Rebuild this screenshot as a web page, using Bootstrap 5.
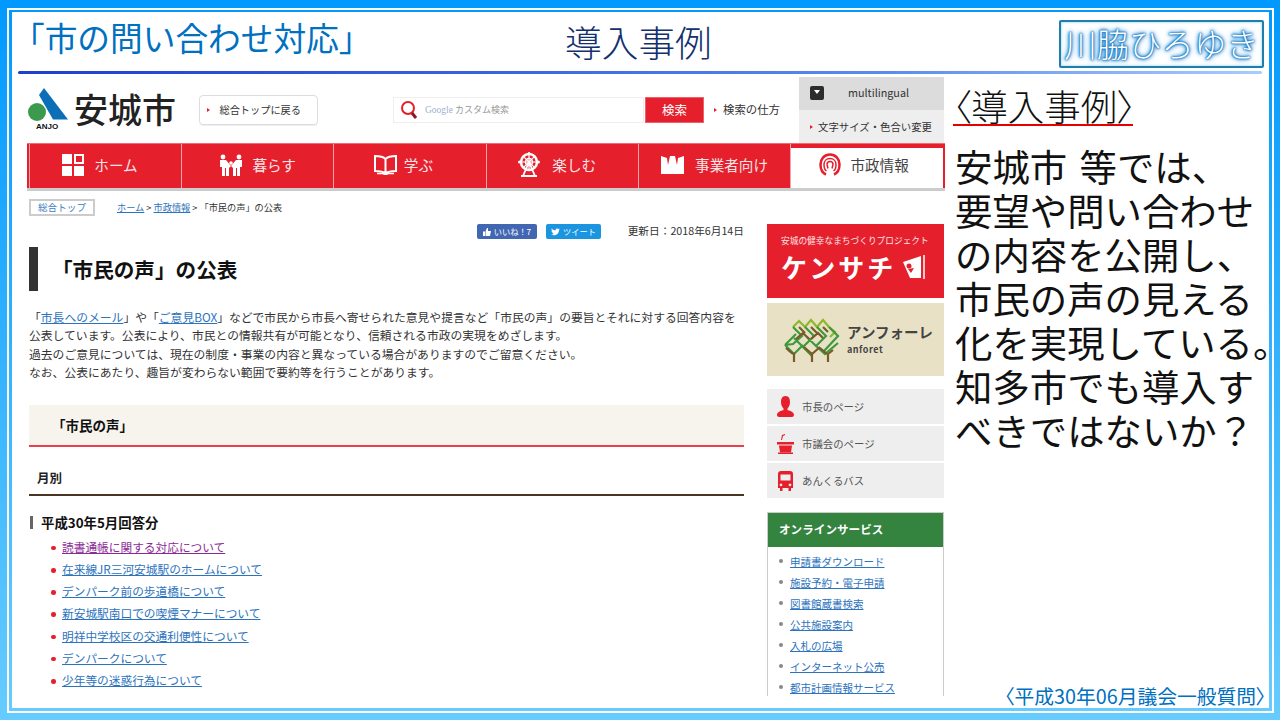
<!DOCTYPE html>
<html lang="ja">
<head>
<meta charset="utf-8">
<title>市の問い合わせ対応 導入事例</title>
<link href="https://cdn.jsdelivr.net/npm/bootstrap@5.3.0/dist/css/bootstrap.min.css" rel="stylesheet">
<style>
html,body{margin:0;height:100%;overflow:hidden;background:#fff}
body{font-family:"Noto Sans CJK JP","Noto Sans",sans-serif;color:#222}
.frame-a{width:1280px;height:720px;padding:8px 6px 7px 7px;background:linear-gradient(#0099ff,#66ccff)}
.frame-b{height:100%;padding:1.5px 2px 2px 2px;background:#fff}
.frame-c{height:100%;padding:2.5px 3px 3px 3px;background:linear-gradient(#0099ff,#66ccff)}
.frame-d{height:100%;background:#fff}
.head-row{height:59px;flex:none}
.ttl-l{width:553px;padding-left:0;font-size:32.7px;line-height:1;color:#0070c0;padding-bottom:8px;white-space:nowrap}
.ttl-c{width:494px;font-size:36.7px;line-height:1;color:#12306e;font-weight:300;white-space:nowrap}
.name-box{width:205px;height:48px;margin-top:4px;border:2px solid #1e7fae;border-radius:2px;font-size:32.4px;line-height:1;color:#fff;font-weight:300;text-shadow:0 0 1px #0a6fc0,0 0 2px #0a6fc0,0 0 3px #0a6fc0,0 0 4px #0d7ccc,0 0 6px #3aa0e0;white-space:nowrap;box-shadow:inset 0 0 3px #8cc8e8}
.rule{height:3px;margin:0 7px 2px 6px;flex:none;border-radius:2px;background:linear-gradient(90deg,#1d3fd0 0,#3a63e0 38%,#5c8cf0 70%,#a8ccff 100%)}
.body-row{height:632px;flex:none}
.site{width:932px;height:620px;flex:none;overflow:hidden;margin-left:6px;padding:1px 5px 0 9px;color:#333}
.site-top{height:66px;flex:none}
.logo-svg{flex:none}
.logo-txt{font-size:34px;line-height:1;color:#222;margin-left:6px;font-weight:500;white-space:nowrap;flex:none;padding-bottom:3px}
.back-btn{width:119px;height:30px;margin-left:23px;border:1px solid #ddd;border-radius:4px;font-size:10.2px;color:#333;padding-left:7px;box-shadow:0 1px 0 #eee;white-space:nowrap;flex:none}
.tri{display:inline-block;width:0;height:0;border-left:3.5px solid #e61f2d;border-top:2.5px solid transparent;border-bottom:2.5px solid transparent;margin-right:9.5px;flex:none}
.search-box{width:251px;height:26px;margin-left:75px;border:1px solid #eee;padding-left:6px;font-size:9px;color:#999;white-space:nowrap;flex:none}
.g-word{font-size:9.5px;color:#9fb0d0;margin-left:6px;margin-right:2px;font-family:"Liberation Serif",serif}
.search-go{width:59px;height:26px;margin-left:1px;background:#e61f2d;color:#fff;font-size:12.5px;border:1px solid #f0606a;flex:none}
.how-to{margin-left:10px;width:85px;font-size:11.4px;color:#333;white-space:nowrap;flex:none}
.how-to .tri{margin-right:6px}
.lang-box{width:145px;flex:none}
.lang-a{height:33px;background:#dcdcdc;font-size:10.8px;color:#333;padding-left:11px;padding-bottom:2px}
.lang-sq{width:14px;height:14px;background:#2d2d2d;border-radius:2px;margin-right:24px}
.lang-b{height:33px;background:#eeeeee;font-size:10.4px;color:#333;padding-left:11px;white-space:nowrap}
.lang-b .tri{margin-right:5px}
.main-nav{height:45px;background:#e61f2d;border-top:1px solid #f26a73;box-shadow:0 3px 0 #ccc;flex:none;padding-left:2px;color:#fff;font-size:14.6px}
.nav-cell{flex:0 0 152.3px;height:100%;border-right:1px solid #f4a3a8;gap:9px;white-space:nowrap;color:#f8e4e4;padding-bottom:3px}
.nav-first{border-left:1px solid #f4a3a8;flex-basis:153px;padding-right:11px;gap:10px}
.nudge-b{padding-right:13px;gap:7px}
.nudge-c{padding-right:10px;gap:12px}
.nudge-e{gap:11px}
.nav-now{flex:1 1 auto;background:#fff;color:#444;border-top:4px solid #e61f2d;border-right:2px solid #e61f2d;gap:9px;padding-bottom:7px;padding-right:6px}
.crumb-row{margin-top:11px;margin-left:2px;height:17px;font-size:9.2px;color:#333;white-space:nowrap}
.home-tag{width:66px;height:17px;border:2px solid #ccc;color:#3f82c4;font-size:9.6px;margin-right:22px}
.site a{color:#2c73bd;text-decoration:underline}
.site a.seen{color:#8b2a96}
.split{margin-top:8px;margin-left:2px}
.col-main{width:715px;flex:none}
.col-side{width:177px;margin-left:23px;flex:none}
.meta-row{height:15px}
.soc-a,.soc-b{height:15px;border-radius:2px;color:#fff;font-size:8.2px;white-space:nowrap;gap:3px}
.soc-a{width:60px;background:#4267b2}
.soc-b{width:55px;background:#1b95e0;margin-left:9px;margin-right:26px}
.upd{width:117px;font-size:10.7px;white-space:nowrap;text-align:right;color:#333}
.h-block{height:44px;margin-top:8px;border-left:9px solid #333;padding-left:14px;font-size:20.6px;font-weight:700;color:#111;white-space:nowrap}
.para{margin:16.5px 0 0;font-size:11.8px;line-height:18.6px;white-space:nowrap;color:#333}
.sec-a{height:42px;margin-top:23px;background:#f7f4ed;border-bottom:2px solid #e8404f;padding-left:23px;font-size:13.5px;font-weight:700;color:#111}
.sec-b{height:29px;margin-top:20px;border-bottom:2px solid #4a3520;padding-left:8px;padding-bottom:4px;font-size:12.5px;font-weight:700;color:#222}
.sec-c{height:13px;margin-top:20px;border-left:3.5px solid #666;margin-left:1px;padding-left:8px;font-size:13.4px;font-weight:700;color:#111;line-height:13px;white-space:nowrap}
.link-list{margin:7px 0 0;padding:0;list-style:none;font-size:11.7px;line-height:22.2px}
.link-list li{padding-left:33px;position:relative}
.link-list li::before{content:"";position:absolute;left:22px;top:10px;width:4.5px;height:4.5px;border-radius:50%;background:#e61f2d}
.ban-red{height:74px;background:#e61f2d;color:#fff;padding:12px 0 0 14px}
.ban-sub{font-size:8.7px;line-height:1.2;white-space:nowrap;color:#fbe6e6}
.ban-big{font-size:26px;line-height:1;font-weight:700;letter-spacing:3px;margin-top:8px;white-space:nowrap}
.ban-tan{height:73px;margin-top:5px;background:#e8e1c6;padding-left:17px;gap:7px;color:#444}
.anf-a{font-size:14.5px;font-weight:700;line-height:1;white-space:nowrap}
.anf-b{font-size:9px;font-weight:700;line-height:1;margin-top:5px;letter-spacing:.5px}
.grey-btns{margin-top:13px;gap:2px}
.grey-btn{height:35px;background:#eeeeee;font-size:10.4px;color:#555;padding-left:10px;white-space:nowrap}
.grey-btn svg{width:17px;margin-right:8px;flex:none}
.svc-box{margin-top:14px;border:1px solid #ccc;border-bottom:0;height:200px}
.svc-head{height:34px;background:#34833f;color:#fff;font-size:11.6px;font-weight:700;padding-left:11px;white-space:nowrap}
.svc-list{margin:4px 0 0;padding:0;list-style:none;font-size:10.5px;line-height:21px}
.svc-list li{padding-left:22px;position:relative;white-space:nowrap}
.svc-list li::before{content:"";position:absolute;left:11px;top:8px;width:4px;height:4px;border-radius:50%;background:#888}
.side-txt{padding-left:5px;min-width:0;flex:1 1 0}
.case-head{align-self:flex-start;margin-top:12px;margin-left:-2px;font-size:36.5px;line-height:36px;color:#111;border-bottom:2.5px solid #e60000;white-space:nowrap;font-weight:300;height:38px}
.narrow{font-feature-settings:"palt" 1}
.narrow-end{margin-right:-3px}
.big-txt{margin:18px 0 0;font-size:37.4px;line-height:44px;color:#111;white-space:nowrap;word-spacing:4px}
.foot-note{margin-top:auto;align-self:flex-end;font-size:19.8px;line-height:24px;color:#0070c0;white-space:nowrap;margin-right:3px}
</style>
</head>
<body>
<div class="frame-a"><div class="frame-b"><div class="frame-c"><div class="frame-d d-flex flex-column">

  <div class="head-row d-flex align-items-center">
    <div class="ttl-l">「市の問い合わせ対応」</div>
    <div class="ttl-c">導入事例</div>
    <div class="name-box d-flex align-items-center justify-content-center">川脇ひろゆき</div>
  </div>
  <div class="rule"></div>

  <div class="body-row d-flex">
    <div class="site d-flex flex-column">
      <div class="site-top d-flex align-items-center">
        <svg width="41" height="44" viewBox="0 0 41 44" class="logo-svg" aria-hidden="true">
          <path d="M17 0L41 31.500H26L12 7Z" fill="#0b6fb8"/>
          <circle cx="10" cy="24" r="9" fill="#3b9a4e"/>
          <text x="9" y="41" font-family="Liberation Sans,sans-serif" font-size="8" font-weight="700" fill="#111">ANJO</text>
        </svg>
        <div class="logo-txt">安城市</div>
        <div class="back-btn d-flex align-items-center"><span class="tri"></span>総合トップに戻る</div>
        <div class="search-box d-flex align-items-center">
          <svg width="19" height="20" viewBox="0 0 19 20" aria-hidden="true"><circle cx="8" cy="8" r="6" fill="none" stroke="#e61f2d" stroke-width="2"/><path d="M12 13l4 5" stroke="#8a1a22" stroke-width="3"/></svg>
          <span class="g-word">Google</span>カスタム検索
        </div>
        <div class="search-go d-flex align-items-center justify-content-center">検索</div>
        <div class="how-to d-flex align-items-center"><span class="tri"></span>検索の仕方</div>
        <div class="lang-box">
          <div class="lang-a d-flex align-items-center"><span class="lang-sq d-flex align-items-center justify-content-center"><svg width="6" height="5" viewBox="0 0 6 5" aria-hidden="true"><path d="M0 0h6L3 4z" fill="#fff"/></svg></span>multilingual</div>
          <div class="lang-b d-flex align-items-center"><span class="tri"></span>文字サイズ・色合い変更</div>
        </div>
      </div>

      <div class="main-nav d-flex">
        <div class="nav-cell nav-first d-flex align-items-center justify-content-center">
          <svg width="22" height="22" viewBox="0 0 22 22" aria-hidden="true"><path d="M0 0h10v10H0zM0 12h10v10H0zM12 12h10v10H12z" fill="#fff"/><path d="M13 1h8v8h-8z" fill="none" stroke="#fff" stroke-width="2"/></svg>ホーム
        </div>
        <div class="nav-cell d-flex align-items-center justify-content-center" >
          <svg width="24" height="22" viewBox="0 0 24 22" aria-hidden="true" fill="#fff"><circle cx="4" cy="3" r="2.400"/><circle cx="20" cy="3" r="2.400"/><circle cx="12" cy="9" r="1.800"/><path d="M1 6h6l5 6 5-6h6v7h-2v9h-3v-8h-1v8h-3v-8l-2-2-2 2v8H7v-8H6v8H3v-9H1z"/></svg>暮らす
        </div>
        <div class="nav-cell nudge-b d-flex align-items-center justify-content-center">
          <svg width="23" height="20" viewBox="0 0 23 20" aria-hidden="true"><path d="M11.500 4C9 1.500 5 1 1 1v15c4 0 8 .3 10.500 2.500C14 16.300 18 16 22 16V1c-4 0-8 .5-10.500 3zM11.500 4v14" fill="none" stroke="#fff" stroke-width="2"/><path d="M3 18.500h6l2.500 1.500 2.500-1.500h6" fill="none" stroke="#fff" stroke-width="1.500"/></svg>学ぶ
        </div>
        <div class="nav-cell nudge-c d-flex align-items-center justify-content-center" >
          <svg width="22" height="25" viewBox="0 0 22 25" aria-hidden="true" fill="none" stroke="#fff"><circle cx="11" cy="10" r="8" stroke-width="2.500"/><circle cx="11" cy="10" r="3.500" stroke-width="1.500"/><path d="M11 2v16M3 10h16M5.300 4.300l11.400 11.400M16.700 4.300L5.300 15.700" stroke-width="1.200"/><path d="M11 10L5 24M11 10l6 14M3 24h16" stroke-width="1.800"/><circle cx="11" cy="1.500" r="1.500" fill="#fff" stroke="none"/><circle cx="1.500" cy="10" r="1.500" fill="#fff" stroke="none"/><circle cx="20.500" cy="10" r="1.500" fill="#fff" stroke="none"/></svg>楽しむ
        </div>
        <div class="nav-cell nudge-e d-flex align-items-center justify-content-center" >
          <svg width="23" height="18" viewBox="0 0 23 18" aria-hidden="true"><path d="M0 0l6 2 1 7 2-9h5l2 9 1-7 6-2v18H0z" fill="#fff"/></svg>事業者向け
        </div>
        <div class="nav-cell nav-now d-flex align-items-center justify-content-center">
          <svg width="22" height="23" viewBox="0 0 22 23" aria-hidden="true" fill="none" stroke="#e61f2d"><path d="M7 21.500C3.500 20 1.500 16 1.500 11.500 1.500 6 5.500 1.500 11 1.500s9.500 4.500 9.500 10c0 4.500-2 8.500-5.500 10" stroke-width="2.500"/><path d="M7.500 18c-1.500-1-2.500-3.500-2.500-6.500C5 8 7.500 5.500 11 5.500s6 2.500 6 6c0 3-1 5.500-2.500 6.500" stroke-width="1.500"/><path d="M8 11.500c0-2 1.500-3 3-3s3 1 3 3l-1 4M8 11.500l1 4" stroke-width="1.500"/></svg>市政情報
        </div>
      </div>

      <div class="crumb-row d-flex align-items-center">
        <span class="home-tag d-flex align-items-center justify-content-center">総合トップ</span>
        <span><a href="#">ホーム</a> &gt; <a href="#">市政情報</a> &gt; 「市民の声」の公表</span>
      </div>

      <div class="split d-flex">
        <div class="col-main">
          <div class="meta-row d-flex align-items-center justify-content-end">
            <span class="soc-a d-flex align-items-center justify-content-center"><svg width="8" height="8" viewBox="0 0 8 8" aria-hidden="true"><path d="M0 3.500h2V8H0zM2.500 3.500L4 0h1v3h3L7 8H2.500z" fill="#fff"/></svg>いいね！7</span>
            <span class="soc-b d-flex align-items-center justify-content-center"><svg width="9" height="8" viewBox="0 0 9 8" aria-hidden="true"><path d="M9 1l-1 .5L8.700.500 7.500 1C6.500 0 4.500.500 4.500 2.200 3 2.200 1.500 1.400.700.400c-.5 1 0 2 .6 2.500L.500 2.700c0 1 .7 1.600 1.500 1.800l-.8 0c.2.800 1 1.200 1.600 1.300C2 6.500 1 6.700 0 6.600 3.500 8.500 8 6.700 8 2z" fill="#fff"/></svg>ツイート</span>
            <span class="upd">更新日：2018年6月14日</span>
          </div>
          <div class="h-block d-flex align-items-center">「市民の声」の公表</div>
          <p class="para">「<a href="#">市長へのメール</a>」や「<a href="#">ご意見BOX</a>」などで市民から市長へ寄せられた意見や提言など「市民の声」の要旨とそれに対する回答内容を<br>公表しています。公表により、市民との情報共有が可能となり、信頼される市政の実現をめざします。<br>過去のご意見については、現在の制度・事業の内容と異なっている場合がありますのでご留意ください。<br>なお、公表にあたり、趣旨が変わらない範囲で要約等を行うことがあります。</p>
          <div class="sec-a d-flex align-items-center">「市民の声」</div>
          <div class="sec-b d-flex align-items-center">月別</div>
          <div class="sec-c d-flex align-items-center">平成30年5月回答分</div>
          <ul class="link-list">
            <li><a class="seen" href="#">読書通帳に関する対応について</a></li>
            <li><a href="#">在来線JR三河安城駅のホームについて</a></li>
            <li><a href="#">デンパーク前の歩道橋について</a></li>
            <li><a href="#">新安城駅南口での喫煙マナーについて</a></li>
            <li><a href="#">明祥中学校区の交通利便性について</a></li>
            <li><a href="#">デンパークについて</a></li>
            <li><a href="#">少年等の迷惑行為について</a></li>
          </ul>
        </div>
        <div class="col-side">
          <div class="ban-red">
            <div class="ban-sub">安城の健幸なまちづくりプロジェクト</div>
            <div class="ban-big d-flex align-items-center">ケンサチ
              <svg width="26" height="26" viewBox="0 0 26 26" class="ms-1" aria-hidden="true"><path d="M3 8L21 2v22H10z" fill="#fff"/><path d="M24 1v24" stroke="#fff" stroke-width="1.500"/><circle cx="9" cy="12" r="2.500" fill="#e61f2d"/><path d="M8 15l6-1-3 5z" fill="#e61f2d"/></svg>
            </div>
          </div>
          <div class="ban-tan d-flex align-items-center">
            <svg width="56" height="46" viewBox="0 0 56 46" fill="none" stroke-width="2.200" aria-hidden="true" class="flex-none">
              <path d="M9 10l6-6 6 6 6-7 6 7 6-7 6 7M27 3l6 7M39 3l6 7 6 5-5 5" stroke="#8fb92a"/>
              <path d="M9 10l9 9-9 8-8 1M1 28l11-11M21 10l9 9-11 11-9-9M33 10l9 9-10 10-9-9M45 10l9 9-14 15M19 30l9 9M1 28l9 9 9-9M32 29l9 8 13-11" stroke="#3d9a3c"/>
              <path d="M15 10l6 6M27 10l6 6M39 10l5 5M12 22l7-6 6 6M27 22l7-6 5 5M2 31l7 6M20 30l8 7 8-7M36 31l7 6M10 36v9M28 37v8M44 37v8M9 37l-5-4M28 37l-5-4M44 37l5-4" stroke="#7a5a2a"/>
            </svg>
            <div>
              <div class="anf-a">アンフォーレ</div>
              <div class="anf-b">anforet</div>
            </div>
          </div>
          <div class="grey-btns d-flex flex-column">
            <div class="grey-btn d-flex align-items-center">
              <svg height="21" viewBox="0 0 17 21" aria-hidden="true"><path d="M8.500 0C5 0 4 3 4 6c0 3 1 5 2.500 6.500V14C3 15 0 16.500 0 19c0 1 1 2 2 2h13c1 0 2-1 2-2 0-2.500-3-4-6.500-5v-1.500C12 11 13 9 13 6c0-3-1-6-4.500-6z" fill="#e61f2d"/></svg>市長のページ
            </div>
            <div class="grey-btn d-flex align-items-center">
              <svg height="20" viewBox="0 0 17 20" aria-hidden="true" fill="#e61f2d"><path d="M8 0l-3 1-1 5h1l1-4 2-1z"/><path d="M0 8h17v2.500H0z"/><path d="M2 11.500h13l-1 7H3z"/><path d="M1 18.500h15V20H1z"/></svg>市議会のページ
            </div>
            <div class="grey-btn d-flex align-items-center">
              <svg height="20" viewBox="0 0 15 20" aria-hidden="true" fill="#e61f2d"><path fill-rule="evenodd" d="M3 0h9c2 0 3 1 3 3v14h-2v3h-2.500v-3h-6v3H2v-3H0V3c0-2 1-3 3-3zM2.500 3.500v6h10v-6zM3 12.500a1.400 1.400 0 1 0 .01 0zM12 12.500a1.400 1.400 0 1 0 .01 0z"/></svg>あんくるバス
            </div>
          </div>
          <div class="svc-box">
            <div class="svc-head d-flex align-items-center">オンラインサービス</div>
            <ul class="svc-list">
              <li><a href="#">申請書ダウンロード</a></li>
              <li><a href="#">施設予約・電子申請</a></li>
              <li><a href="#">図書館蔵書検索</a></li>
              <li><a href="#">公共施設案内</a></li>
              <li><a href="#">入札の広場</a></li>
              <li><a href="#">インターネット公売</a></li>
              <li><a href="#">都市計画情報サービス</a></li>
            </ul>
          </div>
        </div>
      </div>
    </div>

    <div class="side-txt d-flex flex-column">
      <div class="case-head"><span class="narrow">〈</span>導入事例<span class="narrow narrow-end">〉</span></div>
      <p class="big-txt">安城市 等では、<br>要望や問い合わせ<br>の内容を公開し、<br>市民の声の見える<br>化を実現している。<br>知多市でも導入す<br>べきではないか？</p>
      <div class="foot-note"><span class="narrow">〈</span>平成30年06月議会一般質問<span class="narrow">〉</span></div>
    </div>
  </div>

</div></div></div></div>
<script src="https://cdn.jsdelivr.net/npm/bootstrap@5.3.0/dist/js/bootstrap.bundle.min.js"></script>
</body>
</html>
